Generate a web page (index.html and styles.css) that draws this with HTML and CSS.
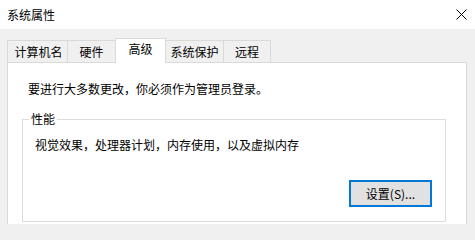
FILE: index.html
```html
<!DOCTYPE html>
<html lang="zh-CN">
<head>
<meta charset="utf-8">
<title>系统属性</title>
<link rel="stylesheet" href="styles.css">
</head>
<body>
<div class="window">
  <div class="titlebar">
    <span class="title">系统属性</span>
    <svg class="close" width="11" height="11" viewBox="0 0 11 11"><path d="M0.5 0.5 L10.5 10.5 M10.5 0.5 L0.5 10.5" stroke="#000" stroke-width="1" fill="none"/></svg>
  </div>
  <div class="body">
    <div class="tabs">
      <div class="tab t1">计算机名</div>
      <div class="tab t2">硬件</div>
      <div class="tab t3 active">高级</div>
      <div class="tab t4">系统保护</div>
      <div class="tab t5">远程</div>
    </div>
    <div class="panel">
      <p class="notice">要进行大多数更改，你必须作为管理员登录。</p>
      <fieldset class="group">
        <legend>性能</legend>
        <div class="group-body">
          <p class="desc">视觉效果，处理器计划，内存使用，以及虚拟内存</p>
          <button class="btn">设置(S)...</button>
        </div>
      </fieldset>
    </div>
  </div>
</div>
</body>
</html>
```
FILE: styles.css
```css
* { box-sizing: border-box; }
html, body {
  margin: 0;
  padding: 0;
  background: #f0f0f0;
  font-family: "Noto Sans CJK SC", "Noto Sans", sans-serif;
  font-size: 12px;
  color: #000;
}
.window {
  width: 475px;
  height: 224px;
  overflow: hidden;
}
.titlebar {
  height: 29px;
  background: #fff;
  display: flex;
  align-items: center;
  justify-content: space-between;
  padding: 0 8px 0 7px;
}
.title { line-height: 16px; }
.close { display: block; margin-top: -1px; }
.body {
  padding: 9px 8px 0 7px;
}
.tabs {
  display: flex;
  align-items: flex-end;
  height: 24px;
}
.tab {
  height: 22px;
  line-height: 21px;
  border: 1px solid #d9d9d9;
  border-bottom: none;
  background: #f0f0f0;
  text-align: center;
  margin-left: -1px;
}
.t1 { width: 61px; margin-left: 0; padding-left: 2px; }
.t2 { width: 49px; }
.t3 { width: 51px; }
.t4 { width: 59px; }
.t5 { width: 48px; }
.tab.active {
  height: 25px;
  line-height: 20px;
  background: #fff;
  margin-bottom: -1px;
  position: relative;
  z-index: 1;
  padding-bottom: 4px;
}
.panel {
  background: #fff;
  border: 1px solid #d9d9d9;
  height: 200px;
  padding: 18px 20px 0 14px;
}
.notice {
  margin: 0 0 14px 6px;
  line-height: 16px;
}
.group {
  margin: 0;
  padding: 0;
  border: 1px solid #dcdcdc;
  min-width: 0;
}
.group legend {
  margin-left: 6px;
  padding: 0 2px;
  line-height: 16px;
}
.group-body {
  display: flex;
  flex-direction: column;
  align-items: flex-end;
  padding: 10px 13px 14px 12px;
}
.desc {
  align-self: flex-start;
  margin: 0;
  line-height: 16px;
}
.btn {
  margin-top: 27px;
  width: 83px;
  height: 27px;
  font: inherit;
  color: #000;
  background: #e1e1e1;
  border: 2px solid #0078d7;
  padding: 0;
  line-height: 20px;
}
```
